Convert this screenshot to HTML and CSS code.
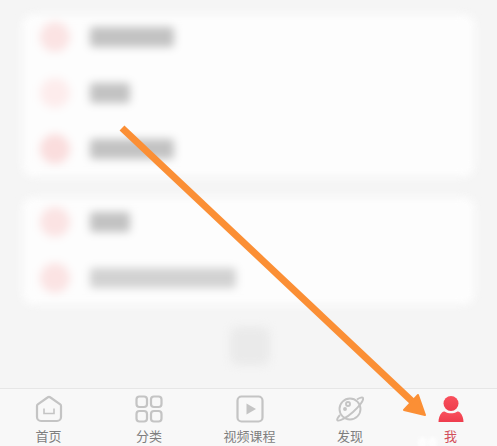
FILE: index.html
```html
<!DOCTYPE html>
<html lang="zh">
<head>
<meta charset="utf-8">
<title>我</title>
<link rel="stylesheet" href="styles.css">
</head>
<body>
<div class="screen">
  <main class="content">
    <section class="card card-one">
      <div class="row"><span class="dot"></span><span class="bar w-84"></span></div>
      <div class="row"><span class="dot dot-light"></span><span class="bar w-40"></span></div>
      <div class="row"><span class="dot dot-strong"></span><span class="bar w-84"></span></div>
    </section>
    <section class="card card-two">
      <div class="row"><span class="dot"></span><span class="bar w-40"></span></div>
      <div class="row"><span class="dot"></span><span class="bar w-146 bar-light"></span></div>
    </section>
    <div class="float-wrap"><span class="float-btn"></span></div>
  </main>
  <nav class="tabbar">
    <div class="tab">
      <svg class="icon" viewBox="0 0 28 28" fill="none" stroke="#c4c4c4" stroke-width="2.200"><path d="M2 11a2 2 0 0 1 .8-1.600L12.500 2.500a2.500 2.500 0 0 1 3 0l9.700 6.900A2 2 0 0 1 26 11v11a4 4 0 0 1-4 4H6a4 4 0 0 1-4-4Z" stroke-linejoin="round"/><path d="M9 13.500v5h10v-5" stroke-width="1.600"/></svg>
      <span class="label">首页</span>
    </div>
    <div class="tab">
      <svg class="icon" viewBox="0 0 28 28" fill="none" stroke="#c4c4c4" stroke-width="2.200"><rect x="1.500" y="1.500" width="10.500" height="10.500" rx="3"/><rect x="16" y="1.500" width="10.500" height="10.500" rx="3"/><rect x="1.500" y="16" width="10.500" height="10.500" rx="3"/><rect x="16" y="16" width="10.500" height="10.500" rx="3"/></svg>
      <span class="label">分类</span>
    </div>
    <div class="tab">
      <svg class="icon" viewBox="0 0 28 28" fill="none" stroke="#c4c4c4" stroke-width="2.200"><rect x="1.500" y="1.500" width="25" height="25" rx="4"/><path d="M10.500 8.500 20 14l-9.500 5.500Z" fill="#c4c4c4" stroke="none"/></svg>
      <span class="label">视频课程</span>
    </div>
    <div class="tab">
      <svg class="icon" viewBox="0 0 28 28" fill="none" stroke="#c4c4c4" stroke-width="1.900"><circle cx="14" cy="14" r="10.500"/><path d="M21 4.500c3-2 5.500-2.500 6-1.500 1 2-4 8.500-10 14S3.500 26.500 1.500 25.500c-1-.6.300-3 2.500-5.500"/><circle cx="12" cy="9" r="2"/><circle cx="9" cy="14" r="1"/></svg>
      <span class="label">发现</span>
    </div>
    <div class="tab tab-active">
      <svg class="icon" viewBox="0 0 28 28"><defs><linearGradient id="me" x1="0" y1="0" x2="0" y2="1"><stop offset="0" stop-color="#f9505c"/><stop offset="1" stop-color="#ee3d4d"/></linearGradient></defs><circle cx="14" cy="8.500" r="7.500" fill="url(#me)"/><path d="M1.500 27c0-3.500 1-7 3.500-9.500 1-1 2-1.300 3-.8 3.500 2 8.500 2 12 0 1-.5 2-.2 3 .8 2.500 2.500 3.500 6 3.500 9.500Z" fill="url(#me)"/></svg>
      <span class="label">我</span>
    </div>
  </nav>
  <div class="watermark"><span></span><span></span></div>
  <svg class="arrow" viewBox="0 0 497 446" aria-hidden="true"><path d="M122 128 416 405" stroke="#fb8f35" stroke-width="7" fill="none"/><path d="M418 395 425 415 404 410Z" fill="#fb8f35" stroke="#fb8f35" stroke-width="2" stroke-linejoin="round"/></svg>
</div>
</body>
</html>
```
FILE: styles.css
```css
* { box-sizing: border-box; }
html, body { margin: 0; padding: 0; }
body { width: 497px; height: 446px; overflow: hidden; background: #f5f5f5; font-family: "Noto Sans CJK SC", "Liberation Sans", sans-serif; }
.screen { position: relative; width: 497px; height: 446px; display: flex; flex-direction: column; overflow: hidden; }
.content { flex: 1; min-height: 0; padding: 14px 22px 0 22px; display: flex; flex-direction: column; background: #f5f5f5; }
.card { background: #fdfdfd; border-radius: 12px; padding: 0 18px; display: flex; flex-direction: column; gap: 10px; filter: blur(4px); }
.card-one { height: 163px; }
.card-two { height: 108px; margin-top: 20px; padding-top: 2px; }
.row { display: flex; align-items: center; gap: 20px; height: 46px; flex: none; }
.dot { width: 30px; height: 30px; border-radius: 50%; background: #fbe3e3; filter: blur(1px); }
.dot-light { background: #fdecec; }
.dot-strong { background: #fadddd; }
.bar { height: 20px; background: #c2c2c2; border-radius: 3px; }
.bar-light { background: #d2d2d2; }
.w-84 { width: 84px; }
.w-40 { width: 40px; }
.w-146 { width: 146px; }
.float-wrap { display: flex; justify-content: flex-end; padding-right: 205px; margin-top: 22px; }
.float-btn { width: 40px; height: 38px; border-radius: 8px; background: #eaeaea; filter: blur(4px); }
.tabbar { flex: none; height: 58px; display: grid; grid-template-columns: repeat(5, 100.5px); justify-content: center; padding-left: 2px; background: #f8f8f8; border-top: 1px solid #e6e6e6; }
.tab { display: flex; flex-direction: column; align-items: center; padding-top: 6px; }
.icon { width: 28px; height: 28px; display: block; }
.label { margin-top: 4px; font-size: 13px; line-height: 18px; color: #7e7e7e; }
.tab-active .label { color: #d2505b; }
.watermark { position: absolute; left: 418px; top: 437px; display: flex; gap: 1px; filter: blur(1.500px); opacity: .8; }
.watermark span { width: 9px; height: 11px; border-radius: 50%; background: #fff; }
.arrow { position: absolute; left: 0; top: 0; width: 497px; height: 446px; pointer-events: none; }
```
